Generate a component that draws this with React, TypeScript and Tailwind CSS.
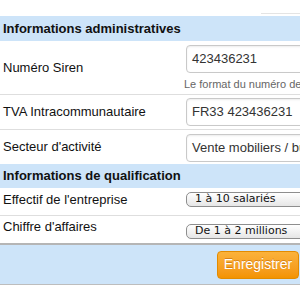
const sans = "font-['Liberation_Sans','Helvetica',Arial,sans-serif]"

function SectionHeader({ title, h }: { title: string; h: string }) {
  return (
    <div className={`flex ${h} shrink-0 items-center bg-[#cde4f9] pl-[3px] text-[13px] font-bold text-[#111]`}>
      {title}
    </div>
  )
}

function TextInput({ value }: { value: string }) {
  return (
    <div className="flex h-[28px] w-[140px] items-center rounded-[4px] border border-[#c9c9c9] bg-white pl-[5px] text-[13px] whitespace-nowrap text-[#333] shadow-[inset_0_1px_2px_rgba(0,0,0,0.08)]">
      {value}
    </div>
  )
}

function SelectBox({ value }: { value: string }) {
  return (
    <div className="flex h-[15px] w-[140px] items-center rounded-[5px] border border-[#8e8e8e] bg-gradient-to-b from-white to-[#e6e6e6] pl-[8px] font-['DejaVu_Sans',sans-serif] text-[11px] whitespace-nowrap text-[#111]">
      {value}
    </div>
  )
}

export default function App() {
  return (
    <div className={`${sans} flex h-[300px] w-[300px] flex-col overflow-hidden bg-white text-[13px] text-[#111]`}>
      <div className="h-[16px] shrink-0 pt-[13px] pl-[261px]">
        <div className="border-t border-[#e4e4e4]" />
      </div>

      <SectionHeader title="Informations administratives" h="h-[25px]" />

      <div className="grid h-[54px] shrink-0 grid-cols-[186px_1fr] border-b border-[#dedede]">
        <div className="flex items-center pl-[3px]">Numéro Siren</div>
        <div className="pt-[4px]">
          <TextInput value="423436231" />
          <div className="mt-[3px] -ml-[2px] text-[11px] whitespace-nowrap text-[#666]">
            Le format du numéro de Siren
          </div>
        </div>
      </div>

      <div className="grid h-[35px] shrink-0 grid-cols-[186px_1fr] border-b border-[#dedede]">
        <div className="flex items-center pl-[3px]">TVA Intracommunautaire</div>
        <div className="pt-[3px]">
          <TextInput value="FR33 423436231" />
        </div>
      </div>

      <div className="grid h-[34px] shrink-0 grid-cols-[186px_1fr]">
        <div className="flex items-center pl-[3px]">Secteur d'activité</div>
        <div className="pt-[4px]">
          <TextInput value="Vente mobiliers / bureaux" />
        </div>
      </div>

      <SectionHeader title="Informations de qualification" h="h-[24px]" />

      <div className="grid h-[28px] shrink-0 grid-cols-[186px_1fr] border-b border-[#dedede]">
        <div className="flex items-center pl-[3px] pb-[3px]">Effectif de l'entreprise</div>
        <div className="pt-[4px]">
          <SelectBox value="1 à 10 salariés" />
        </div>
      </div>

      <div className="grid h-[27px] shrink-0 grid-cols-[186px_1fr]">
        <div className="flex items-center pl-[3px] pb-[5px]">Chiffre d'affaires</div>
        <div className="pt-[8px]">
          <SelectBox value="De 1 à 2 millions" />
        </div>
      </div>

      <div className="flex h-[42px] shrink-0 items-center justify-end border-t-2 border-b border-t-[#b5b5b5] border-b-[#bdbdbd] bg-[#cde4f9] pr-[1px]">
        <button className="flex h-[28px] w-[82px] items-center justify-center rounded-[4px] border border-[#e38b00] bg-gradient-to-b from-[#fbb23a] to-[#f39300] text-[14px] text-white [text-shadow:0_-1px_0_rgba(180,90,0,0.5)]">
          Enregistrer
        </button>
      </div>
    </div>
  )
}
